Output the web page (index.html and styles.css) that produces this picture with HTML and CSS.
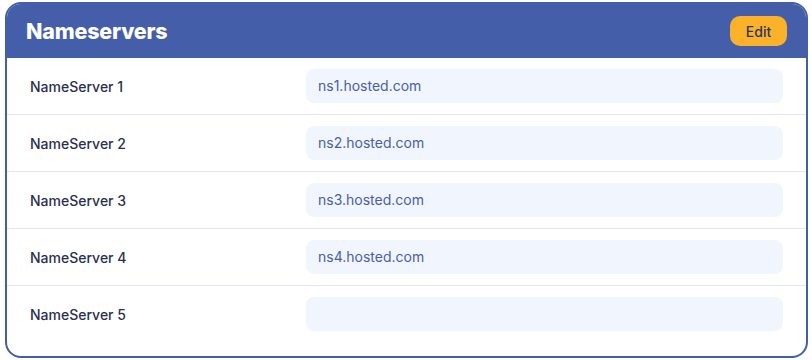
FILE: index.html
```html
<!DOCTYPE html>
<html lang="en">
<head>
    <meta charset="UTF-8">
    <title>Nameservers</title>
    <link rel="stylesheet" href="styles.css">
</head>
<body>
    <div class="card">
        <div class="card-head">
            <h2>Nameservers</h2>
            <button class="edit">Edit</button>
        </div>
        <div class="row">
            <div class="label">NameServer 1</div>
            <div class="field">ns1.hosted.com</div>
        </div>
        <div class="row">
            <div class="label">NameServer 2</div>
            <div class="field">ns2.hosted.com</div>
        </div>
        <div class="row">
            <div class="label">NameServer 3</div>
            <div class="field">ns3.hosted.com</div>
        </div>
        <div class="row">
            <div class="label">NameServer 4</div>
            <div class="field">ns4.hosted.com</div>
        </div>
        <div class="row last">
            <div class="label">NameServer 5</div>
            <div class="field"></div>
        </div>
    </div>
</body>
</html>
```

FILE: styles.css
```css
*{
    margin:0;
    padding:0;
    box-sizing:border-box;
}
body{
    background:#fff;
    font-family:Inter, "Noto Sans", sans-serif;
}
.card{
    width:803px;
    margin:2px 0 0 5px;
    border:2px solid #455ea9;
    border-radius:16px;
    overflow:hidden;
    background:#fff;
}
.card-head{
    display:flex;
    align-items:center;
    justify-content:space-between;
    height:54px;
    padding:0 19px 0 19px;
    background:#455ea9;
}
.card-head h2{
    color:#fff;
    font-size:21.5px;
    font-weight:800;
    letter-spacing:-0.2px;
}
.edit{
    width:57px;
    height:30px;
    border:none;
    border-radius:10px;
    background:#fbb228;
    color:#2d3668;
    font-family:inherit;
    font-size:14px;
    font-weight:500;
}
.row{
    display:flex;
    align-items:center;
    height:57px;
    padding:0 23px;
    border-bottom:1px solid #e3e6ef;
}
.row.last{
    height:70px;
    padding-bottom:14px;
    border-bottom:none;
}
.label{
    width:276px;
    color:#2b2f4f;
    font-size:14px;
    font-weight:500;
}
.field{
    flex:1;
    height:34px;
    line-height:34px;
    padding-left:12px;
    border-radius:8px;
    background:#f1f5fd;
    color:#4a5fa8;
    font-size:14px;
}
```
